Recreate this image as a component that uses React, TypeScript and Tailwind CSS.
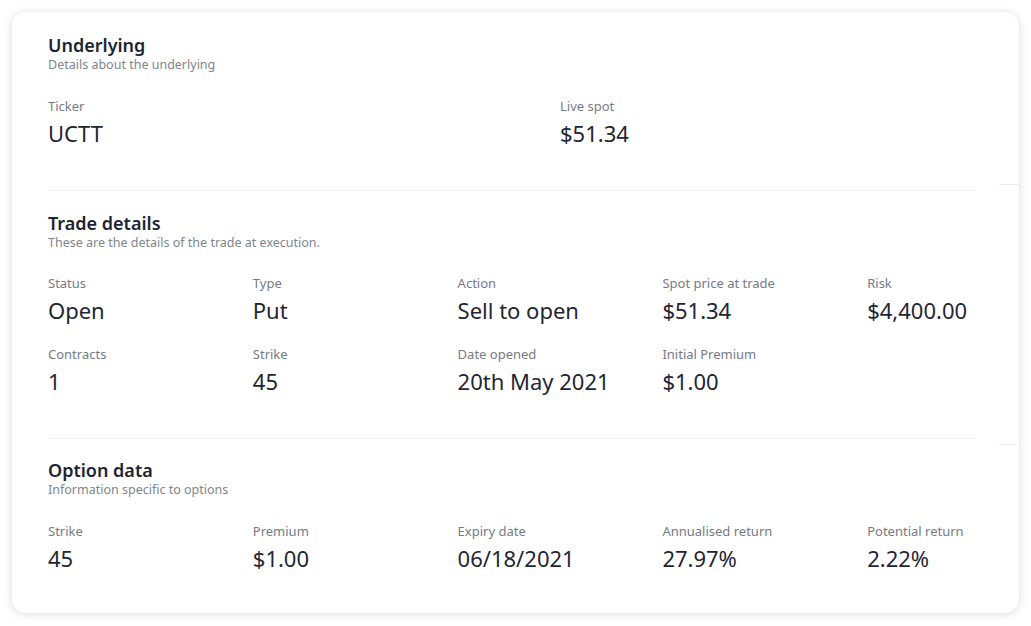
import React from "react";

type Item = { label: string; value: string };

const font = { fontFamily: '"Noto Sans", "Open Sans", sans-serif' };

function Field({ label, value }: Item) {
  return (
    <div className="flex flex-col">
      <div className="text-[13px] leading-4 text-[#757b85]">{label}</div>
      <div className="mt-[5px] text-[22px] leading-7 text-[#1f2633]">{value}</div>
    </div>
  );
}

function SectionHead({ title, sub }: { title: string; sub: string }) {
  return (
    <div>
      <h2 className="text-lg font-semibold leading-6 text-[#1d2433]">{title}</h2>
      <p className="text-[12.5px] leading-4 text-[#80858e]">{sub}</p>
    </div>
  );
}

export default function App() {
  const trade: Item[] = [
    { label: "Status", value: "Open" },
    { label: "Type", value: "Put" },
    { label: "Action", value: "Sell to open" },
    { label: "Spot price at trade", value: "$51.34" },
    { label: "Risk", value: "$4,400.00" },
    { label: "Contracts", value: "1" },
    { label: "Strike", value: "45" },
    { label: "Date opened", value: "20th May 2021" },
    { label: "Initial Premium", value: "$1.00" },
  ];
  const option: Item[] = [
    { label: "Strike", value: "45" },
    { label: "Premium", value: "$1.00" },
    { label: "Expiry date", value: "06/18/2021" },
    { label: "Annualised return", value: "27.97%" },
    { label: "Potential return", value: "2.22%" },
  ];
  return (
    <div className="min-h-screen bg-white pt-3 pl-3" style={font}>
      <div className="relative w-[1007px] overflow-hidden rounded-[14px] bg-white shadow-[0_1px_10px_rgba(0,0,0,0.14)]">
        <div className="absolute right-0 top-[172px] h-px w-5 bg-[#eceef3]" />
        <div className="absolute right-0 top-[432px] h-px w-5 bg-[#eceef3]" />

        <section className="px-9 pt-[21px] pb-[43px]">
          <SectionHead title="Underlying" sub="Details about the underlying" />
          <div className="mt-[25px] grid w-[1024px] grid-cols-2">
            <Field label="Ticker" value="UCTT" />
            <Field label="Live spot" value="$51.34" />
          </div>
        </section>
        <div className="mx-9 h-px w-[928px] bg-[#eef0f4]" />

        <section className="px-9 pt-5 pb-[43px]">
          <SectionHead title="Trade details" sub="These are the details of the trade at execution." />
          <div className="mt-6 grid w-[1024px] grid-cols-5 gap-y-[22px]">
            {trade.map((t) => (
              <Field key={t.label + t.value} {...t} />
            ))}
          </div>
        </section>
        <div className="mx-9 h-px w-[928px] bg-[#eef0f4]" />

        <section className="px-9 pt-[19px] pb-[41px]">
          <SectionHead title="Option data" sub="Information specific to options" />
          <div className="mt-[25px] grid w-[1024px] grid-cols-5">
            {option.map((t) => (
              <Field key={t.label} {...t} />
            ))}
          </div>
        </section>
      </div>
    </div>
  );
}
